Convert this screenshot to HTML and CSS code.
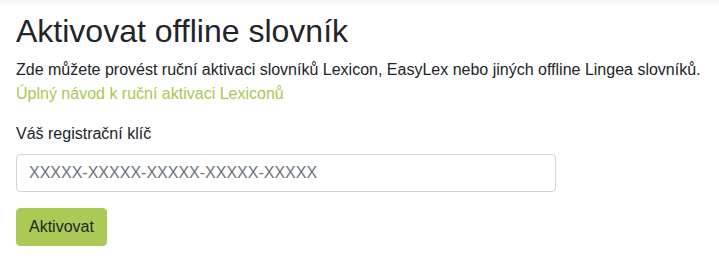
FILE: index.html
```html
<!DOCTYPE html>
<html lang="cs">
<head>
<meta charset="utf-8">
<title>Aktivovat offline slovník</title>
<link rel="stylesheet" href="styles.css">
</head>
<body>
<main class="page">
  <h2 class="title">Aktivovat offline slovník</h2>
  <p class="intro">Zde můžete provést ruční aktivaci slovníků Lexicon, EasyLex nebo jiných offline Lingea slovníků.<br>
  <a class="guide" href="#">Úplný návod k ruční aktivaci Lexiconů</a></p>
  <form class="form">
    <div class="form-group">
      <label class="label" for="key">Váš registrační klíč</label>
      <input class="input" id="key" type="text" placeholder="XXXXX-XXXXX-XXXXX-XXXXX-XXXXX">
    </div>
    <button class="btn" type="button">Aktivovat</button>
  </form>
</main>
</body>
</html>
```

FILE: styles.css
```css
html, body {
  margin: 0;
  padding: 0;
}
body {
  background: linear-gradient(#f1f1f1, #ffffff 6px) no-repeat;
  background-color: #fff;
  font-family: "Liberation Sans", Arial, sans-serif;
  font-size: 16px;
  line-height: 1.5;
  color: #212529;
}
.page {
  padding: 12px 16px 0;
}
.title {
  margin: 0 0 8px;
  font-size: 32px;
  font-weight: 400;
  line-height: 1.2;
  color: #212529;
}
.intro {
  margin: 0 0 16px;
}
.guide {
  color: #a9c852;
  text-decoration: none;
}
.form {
  margin: 0;
}
.form-group {
  margin-bottom: 16px;
}
.label {
  display: inline-block;
  margin-bottom: 8px;
}
.input {
  display: block;
  box-sizing: border-box;
  width: 540px;
  height: 38px;
  margin: 0;
  padding: 6px 12px;
  font-family: inherit;
  font-size: 16px;
  line-height: 1.5;
  color: #495057;
  background: #fff;
  border: 1px solid #ced4da;
  border-radius: 4px;
}
.input::placeholder {
  color: #6c757d;
  opacity: 1;
}
.btn {
  display: inline-block;
  box-sizing: border-box;
  height: 38px;
  margin: 0;
  padding: 6px 12px;
  font-family: inherit;
  font-size: 16px;
  line-height: 1.5;
  color: #212529;
  background: #acc956;
  border: 1px solid #acc956;
  border-radius: 4px;
  cursor: pointer;
}
```
